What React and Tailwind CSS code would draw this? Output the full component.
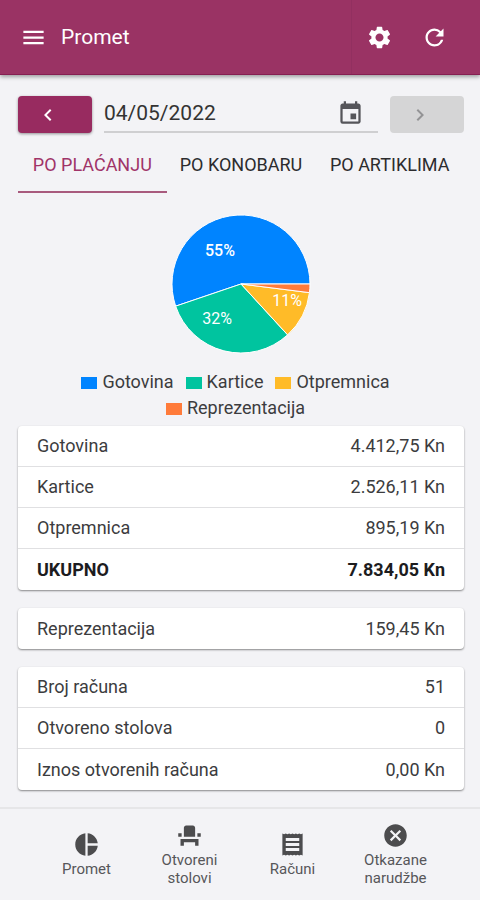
import React, { useState } from 'react';
import {
  MdCancel,
  MdChevronLeft,
  MdChevronRight,
  MdEvent,
  MdEventSeat,
  MdMenu,
  MdPieChart,
  MdRefresh,
  MdSettings,
} from 'react-icons/md';

const slices = [
  { name: 'Gotovina', value: 4412.75, fill: 'fill-[#0084ff]', swatch: 'bg-[#0084ff]', label: '55%', x: 49, y: 36 },
  { name: 'Kartice', value: 2526.11, fill: 'fill-[#00c49f]', swatch: 'bg-[#00c49f]', label: '32%', x: 46, y: 104 },
  { name: 'Otpremnica', value: 895.19, fill: 'fill-[#ffbb28]', swatch: 'bg-[#ffbb28]', label: '11%', x: 116, y: 86 },
  { name: 'Reprezentacija', value: 159.45, fill: 'fill-[#ff7b3a]', swatch: 'bg-[#ff7b3a]' },
];

const cards = [
  [
    { label: 'Gotovina', value: '4.412,75 Kn' },
    { label: 'Kartice', value: '2.526,11 Kn' },
    { label: 'Otpremnica', value: '895,19 Kn' },
    { label: 'UKUPNO', value: '7.834,05 Kn', bold: true },
  ],
  [{ label: 'Reprezentacija', value: '159,45 Kn' }],
  [
    { label: 'Broj računa', value: '51' },
    { label: 'Otvoreno stolova', value: '0' },
    { label: 'Iznos otvorenih računa', value: '0,00 Kn' },
  ],
];

const tabs = ['PO PLAĆANJU', 'PO KONOBARU', 'PO ARTIKLIMA'];

// Receipt with a shallow torn edge and three lines
function ReceiptIcon({ size, className }) {
  return (
    <svg viewBox="0 0 24 24" width={size} height={size} className={className} fill="currentColor" aria-hidden="true">
      <path
        fillRule="evenodd"
        d="M3 21.8l1.5-.6 1.5.6 1.5-.6 1.5.6 1.5-.6 1.5.6 1.5-.6 1.5.6 1.5-.6 1.5.6 1.5-.6 1.5.6V2.2l-1.5.6-1.5-.6-1.5.6-1.5-.6-1.5.6-1.5-.6-1.5.6-1.5-.6-1.5.6L6 2.2l-1.5.6L3 2.2zM6 6.2h12v2.6H6zM6 10.7h12v2.6H6zM6 15.2h12v2.6H6z"
      />
    </svg>
  );
}

const navItems = [
  { label: 'Promet', icon: MdPieChart },
  { label: 'Otvoreni stolovi', icon: MdEventSeat },
  { label: 'Računi', icon: ReceiptIcon },
  { label: 'Otkazane narudžbe', icon: MdCancel },
];

function Header() {
  return (
    <header className="relative flex h-[75px] items-center border-b border-[#861f52] bg-[#9a3364] pl-5 text-white shadow-[0_2px_4px_rgba(0,0,0,0.35)]">
      <button type="button" aria-label="Izbornik">
        <MdMenu size={27} />
      </button>
      <h1 className="ml-3.5 flex-1 text-[21px] leading-6">Promet</h1>
      <div className="flex h-full items-center gap-7 border-l border-[#923060] pr-8 pl-3.5">
        <button type="button" aria-label="Postavke">
          <MdSettings size={27} />
        </button>
        <button type="button" aria-label="Osvježi">
          <MdRefresh size={27} />
        </button>
      </div>
    </header>
  );
}

function DateBar() {
  const [date, setDate] = useState('04/05/2022');

  return (
    <div className="flex items-center gap-3">
      <button
        type="button"
        aria-label="Prethodni dan"
        className="flex h-[37px] w-[74px] items-center justify-center rounded-[4px] bg-[#982b60] pr-3.5 text-white shadow-[0_1px_3px_rgba(0,0,0,0.4)]"
      >
        <MdChevronLeft size={24} />
      </button>
      <div className="flex h-[37px] min-w-0 flex-1 items-center border-b-2 border-[#cfcfd1] pr-3.5">
        <input
          type="text"
          aria-label="Datum"
          value={date}
          onChange={(e) => setDate(e.target.value)}
          className="w-full min-w-0 flex-1 bg-transparent text-[21px] text-[#333] outline-none"
        />
        <button type="button" aria-label="Odaberi datum" className="text-[#55555a]">
          <MdEvent size={27} />
        </button>
      </div>
      <button
        type="button"
        disabled
        aria-label="Sljedeći dan"
        className="flex h-[37px] w-[74px] items-center justify-center rounded-[4px] bg-[#d5d5d6] pr-3.5 text-[#939395]"
      >
        <MdChevronRight size={24} />
      </button>
    </div>
  );
}

function Tabs() {
  const [active, setActive] = useState(0);

  return (
    <div role="tablist" className="mt-1 grid grid-cols-3">
      {tabs.map((tab, index) => (
        <button
          key={tab}
          type="button"
          role="tab"
          aria-selected={active === index}
          onClick={() => setActive(index)}
          className={`h-14 border-b-2 pt-0.5 text-lg whitespace-nowrap ${
            active === index ? 'border-[#a85a7d] text-[#a03468]' : 'border-transparent text-[#2c2c2e]'
          }`}
        >
          {tab}
        </button>
      ))}
    </div>
  );
}

// Slices run counter-clockwise, starting at three o'clock
function PieChart() {
  const r = 69;
  const c = 70;
  const total = slices.reduce((sum, s) => sum + s.value, 0);
  const point = (angle) => `${c + r * Math.cos(angle)} ${c - r * Math.sin(angle)}`;
  let start = 0;

  return (
    <svg viewBox="0 0 140 140" className="mx-auto mt-[21px] h-[140px] w-[140px]" role="img" aria-label="Promet po plaćanju">
      {slices.map((s) => {
        const end = start + (s.value / total) * Math.PI * 2;
        const large = end - start > Math.PI ? 1 : 0;
        const d = `M${c} ${c} L${point(start)} A${r} ${r} 0 ${large} 0 ${point(end)} Z`;
        start = end;
        return <path key={s.name} d={d} className={`${s.fill} stroke-white`} strokeWidth="1" />;
      })}
      {slices.map((s) =>
        s.label ? (
          <text
            key={s.name}
            x={s.x}
            y={s.y}
            textAnchor="middle"
            dominantBaseline="central"
            className={s.name === 'Gotovina' ? 'fill-white text-base font-medium' : 'fill-white text-base'}
          >
            {s.label}
          </text>
        ) : null
      )}
    </svg>
  );
}

function Legend() {
  return (
    <ul className="mt-[15px] flex flex-wrap justify-center gap-x-3 pr-[59px] pl-12">
      {slices.map((s) => (
        <li key={s.name} className="flex items-center gap-[5px] text-lg leading-[26px] text-[#3c3c3e]">
          <span className={`mt-0.5 h-3 w-4 ${s.swatch}`} />
          {s.name}
        </li>
      ))}
    </ul>
  );
}

function Card({ rows }) {
  return (
    <dl className="divide-y divide-[#e0e0e2] rounded-[4px] bg-white shadow-[0_1px_2px_rgba(0,0,0,0.45)]">
      {rows.map((row) => (
        <div
          key={row.label}
          className={`flex h-[41px] items-center justify-between px-[19px] text-lg ${
            row.bold ? 'font-bold text-[#1c1c1e]' : 'text-[#3c3c3e]'
          }`}
        >
          <dt>{row.label}</dt>
          <dd>{row.value}</dd>
        </div>
      ))}
    </dl>
  );
}

function BottomNav() {
  return (
    <nav className="flex h-[93px] justify-between border-t-2 border-[#e6e6e8] pr-[33px] pl-[35px] text-[#57575a]">
      {navItems.map(({ label, icon: Icon }) => (
        <button key={label} type="button" className="flex w-[103px] flex-col items-center justify-center gap-0.5 px-3">
          <Icon size={27} className="text-[#4c4c4e]" />
          <span className="text-[15px] leading-[18px]">{label}</span>
        </button>
      ))}
    </nav>
  );
}

export default function App() {
  return (
    <div className="flex min-h-screen flex-col bg-[#f3f3f6] font-[Roboto,sans-serif]">
      <Header />
      <main className="flex-1 pt-[21px] pr-4 pb-[17px] pl-[18px]">
        <DateBar />
        <Tabs />
        <PieChart />
        <Legend />
        <div className="mt-[5px] space-y-[18px]">
          {cards.map((rows) => (
            <Card key={rows[0].label} rows={rows} />
          ))}
        </div>
      </main>
      <BottomNav />
    </div>
  );
}
